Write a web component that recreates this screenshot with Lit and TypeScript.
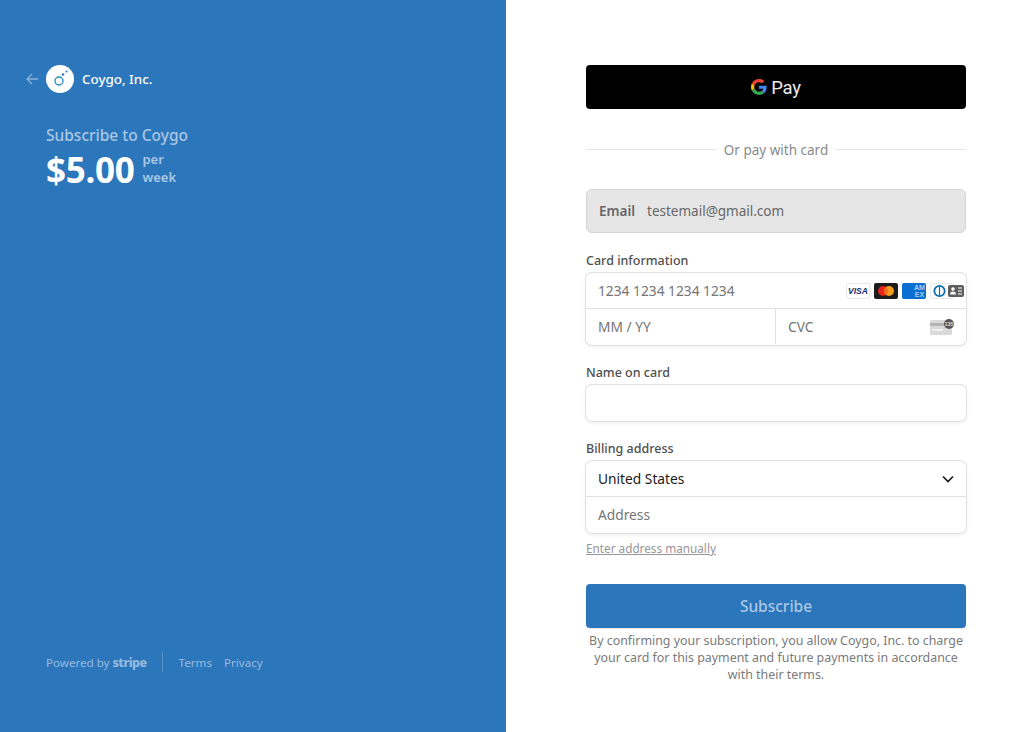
import { LitElement, html, css } from "lit";
import { customElement } from "lit/decorators.js";

@customElement("app-root")
export class AppRoot extends LitElement {
  static styles = css`
    :host { display: block; width: 1012px; height: 732px; overflow: hidden; font-family: "Noto Sans", "Open Sans", sans-serif; background: #fff; }
    * { box-sizing: border-box; }
    .page { display: flex; height: 732px; }
    .left { width: 506px; flex: none; background: #2c76bc; padding: 65px 0 60px 26px; display: flex; flex-direction: column; }
    .brand { display: flex; align-items: center; height: 28px; }
    .back { width: 12px; height: 12px; margin-right: 8px; display: block; }
    .logo { width: 28px; height: 28px; border-radius: 50%; background: #fff; display: flex; align-items: center; justify-content: center; margin-right: 8px; }
    .company { color: #fff; font-size: 13.4px; font-weight: 500; }
    .summary { margin: 32px 0 0 20px; }
    .sub { color: rgba(255,255,255,.6); font-size: 15.5px; font-weight: 500; line-height: 20px; }
    .price { display: flex; align-items: center; margin-top: 6px; }
    .amount { color: #fff; font-size: 35px; font-weight: 700; line-height: 38px; letter-spacing: -.3px; }
    .per { color: rgba(255,255,255,.6); font-size: 13px; font-weight: 600; line-height: 18.5px; margin: -4px 0 0 8px; }
    .foot { margin: auto 0 0 20px; display: flex; align-items: center; font-size: 11.6px; color: rgba(255,255,255,.5); height: 20px; }
    .stripe { font-weight: 800; font-size: 12.5px; margin-left: 3px; letter-spacing: -.5px; }
    .sep { width: 1px; height: 20px; background: rgba(255,255,255,.2); margin: 0 16px 0 15px; }
    .foot .link { margin-right: 12px; }

    .right { flex: 1; padding: 65px 0 0 80px; }
    .form { width: 380px; }
    .gpay { height: 44px; border-radius: 4px; background: #000; display: flex; align-items: center; justify-content: center; gap: 4px; color: #fff; }
    .gpay span { font-family: "Roboto", sans-serif; font-size: 18.5px; line-height: 24px; font-weight: 400; color: #eaeaea; letter-spacing: -.3px; padding-top: 1px; }
    .or { display: flex; align-items: center; gap: 8px; margin-top: 29px; height: 22px; color: #8a8a8a; font-size: 13.5px; }
    .or i { flex: 1; height: 1px; background: #e6e6e6; }
    .or span { padding-top: 2px; }
    .email { margin-top: 29px; height: 44px; border-radius: 6px; border: 1px solid #d4d4d4; background: #e6e6e6; display: flex; align-items: center; padding: 0 12px 1px; font-size: 13.5px; color: #666; }
    .email b { font-weight: 600; margin-right: 12px; }
    .label { font-size: 12.5px; font-weight: 500; color: #4f4f4f; line-height: 18px; margin-top: 19px; }
    .group { border-radius: 6px; box-shadow: 0 0 0 1px #e0e0e0, 0 2px 4px rgba(0,0,0,.07); background: #fff; margin: 3px 0 0; }
    .row { display: flex; align-items: center; height: 35px; padding: 0 12px; font-size: 13.75px; color: #757575; position: relative; }
    .row + .row { border-top: 1px solid #e0e0e0; height: 37px; padding-bottom: 1px; }
    .dark { color: #1a1a1a; justify-content: space-between; }
    .split { padding: 0; }
    .split > div { display: flex; align-items: center; height: 100%; padding: 0 12px; justify-content: space-between; }
    .split > div:first-child { width: 189px; }
    .split > div + div { flex: 1; border-left: 1px solid #e0e0e0; }
    .cards { position: absolute; right: 2px; top: 10px; display: flex; gap: 4px; }
    .cards svg { display: block; }
    .card-text { font-family: "Liberation Sans", sans-serif; font-weight: 700; }
    .diners { margin-right: -10px; }
    .overlay { position: relative; }
    .single { height: 36px; }
    .manual { margin-top: 7px; font-size: 11.75px; color: #969696; text-decoration: underline; line-height: 16px; }
    .btn { margin-top: 28px; height: 44px; border-radius: 4px; background: #2c76bc; color: rgba(255,255,255,.6); display: flex; align-items: center; justify-content: center; font-size: 15.5px; font-weight: 500; box-shadow: 0 1px 2px rgba(0,0,0,.1); }
    .terms { margin-top: 4px; text-align: center; font-size: 12.4px; line-height: 17px; color: #7a7a7a; }
  `;

  render() {
    return html`<div class="page">
      <div class="left">
        <div class="brand">
          <svg class="back" viewBox="0 0 12 12" fill="none" stroke="rgba(255,255,255,.45)" stroke-width="1.3"><path d="M12 6H1M6 1L1 6l5 5"/></svg>
          <div class="logo"><svg width="28" height="28" viewBox="0 0 28 28"><circle cx="13" cy="16" r="4" fill="none" stroke="#2c8fc4" stroke-width="1.4"/><circle cx="17" cy="9.500" r="1.300" fill="#2c76bc"/><circle cx="20.500" cy="6.500" r="1" fill="#2c76bc"/></svg></div>
          <div class="company">Coygo, Inc.</div>
        </div>
        <div class="summary">
          <div class="sub">Subscribe to Coygo</div>
          <div class="price"><div class="amount">$5.00</div><div class="per">per<br />week</div></div>
        </div>
        <div class="foot">Powered by <span class="stripe">stripe</span><i class="sep"></i><span class="link">Terms</span><span class="link">Privacy</span></div>
      </div>
      <div class="right"><div class="form">
        <div class="gpay">
          <svg width="16" height="16" viewBox="0 0 48 48"><path fill="#EA4335" d="M24 9.500c3.500 0 6.700 1.200 9.200 3.600l6.900-6.900C35.900 2.400 30.500 0 24 0 14.600 0 6.500 5.400 2.600 13.200l8 6.200C12.500 13.700 17.800 9.500 24 9.500z"/><path fill="#4285F4" d="M47 24.500c0-1.600-.1-3.100-.4-4.500H24v9h13c-.6 3-2.300 5.500-4.800 7.200l7.700 6C44.400 38 47 31.800 47 24.500z"/><path fill="#FBBC05" d="M10.500 28.600c-.5-1.400-.8-3-.8-4.600s.3-3.200.8-4.600l-8-6.200C.9 16.400 0 20.100 0 24s.9 7.600 2.600 10.800l7.900-6.200z"/><path fill="#34A853" d="M24 48c6.500 0 11.900-2.100 15.900-5.800l-7.700-6c-2.200 1.400-4.900 2.300-8.200 2.300-6.200 0-11.500-4.200-13.400-9.900l-8 6.200C6.500 42.600 14.600 48 24 48z"/></svg>
          <span>Pay</span>
        </div>
        <div class="or"><i></i><span>Or pay with card</span><i></i></div>
        <div class="email"><b>Email</b>testemail@gmail.com</div>
        <div class="label">Card information</div>
        <div class="group">
          <div class="row">1234 1234 1234 1234
            <div class="cards">
              <svg width="24" height="16" viewBox="0 0 24 16"><rect x=".5" y=".5" width="23" height="15" rx="1.500" fill="#fff" stroke="#e8e8e8"/><text class="card-text" x="12" y="11" text-anchor="middle" font-size="8.500" font-style="italic" fill="#1a2a6c">VISA</text></svg>
              <svg width="24" height="16" viewBox="0 0 24 16"><rect width="24" height="16" rx="2" fill="#1c1c1c"/><circle cx="9" cy="8" r="5" fill="#e5231b"/><circle cx="15" cy="8" r="5" fill="#f59e1e"/><path d="M12 4a5 5 0 0 1 0 8 5 5 0 0 1 0-8z" fill="#f26a1b"/></svg>
              <svg width="24" height="16" viewBox="0 0 24 16"><rect width="24" height="16" rx="2" fill="#0a6fd0"/><text class="card-text" x="17.500" y="7" text-anchor="middle" font-size="7" fill="#a9cdf0">AM</text><text class="card-text" x="17.500" y="13.500" text-anchor="middle" font-size="7" fill="#a9cdf0">EX</text></svg>
              <svg class="diners" width="24" height="16" viewBox="0 0 24 16"><rect x=".5" y=".5" width="23" height="15" rx="1.500" fill="#fff" stroke="#e8e8e8"/><circle cx="9.500" cy="8" r="5.200" fill="none" stroke="#0b6fb5" stroke-width="1.800"/><path d="M9.500 3.500v9" stroke="#0b6fb5" stroke-width="1.200"/></svg>
              <svg class="overlay" width="16" height="16" viewBox="0 0 16 16"><rect y="2" width="16" height="12" rx="2" fill="#5e5e5e"/><circle cx="5" cy="6" r="1.800" fill="#fff"/><path d="M2 11.500c0-2 1.300-3 3-3s3 1 3 3z" fill="#fff"/><path d="M10 5h4M10 8h4M10 11h4" stroke="#fff" stroke-width="1.200"/></svg>
            </div>
          </div>
          <div class="row split">
            <div>MM / YY</div>
            <div>CVC
              <svg width="24" height="16" viewBox="0 0 24 16"><rect y="1" width="22" height="15" rx="1.500" fill="#dadada"/><rect y="4" width="22" height="3" fill="#b4b4b4"/><rect x="2" y="10" width="11" height="2" fill="#f2f2f2"/><circle cx="19" cy="5" r="5" fill="#555"/><text class="card-text" x="19" y="7" text-anchor="middle" font-size="5.500" fill="#ddd">135</text></svg>
            </div>
          </div>
        </div>
        <div class="label">Name on card</div>
        <div class="group"><div class="row single"></div></div>
        <div class="label">Billing address</div>
        <div class="group">
          <div class="row dark">United States
            <svg width="12" height="8" viewBox="0 0 12 8" fill="none" stroke="#1a1a1a" stroke-width="1.700"><path d="M1 1.500l5 5 5-5"/></svg>
          </div>
          <div class="row">Address</div>
        </div>
        <div class="manual">Enter address manually</div>
        <div class="btn">Subscribe</div>
        <div class="terms">By confirming your subscription, you allow Coygo, Inc. to charge your card for this payment and future payments in accordance with their terms.</div>
      </div></div>
    </div>`;
  }
}
